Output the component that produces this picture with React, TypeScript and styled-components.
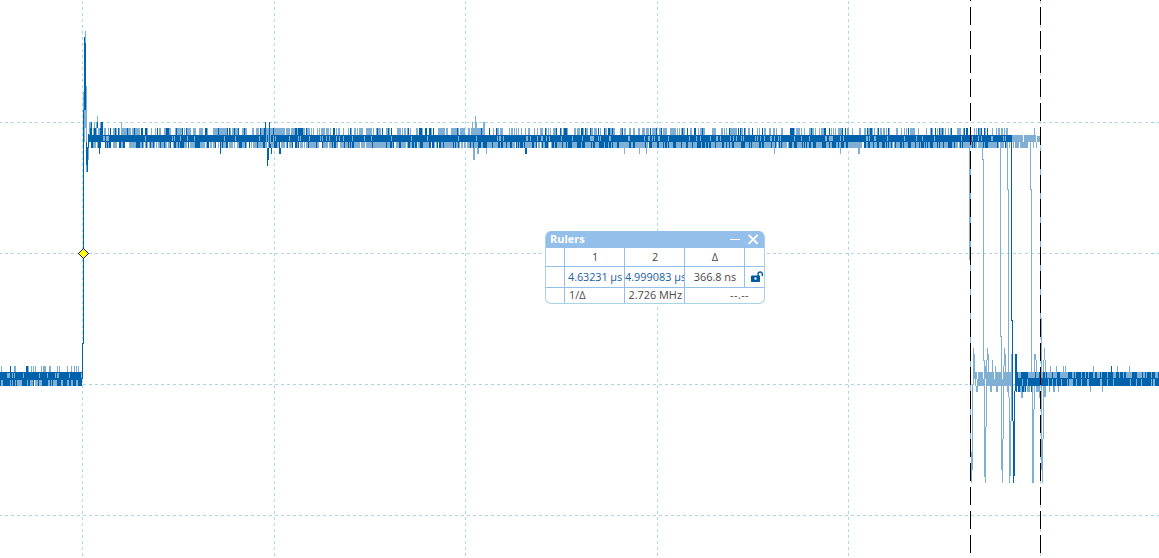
import React from "react";
import styled, { createGlobalStyle } from "styled-components";

const GlobalStyle = createGlobalStyle`
  body { margin: 0; background: #fff; overflow: hidden; }
`;

const DARK = "#0062ab";
const LIGHT = "#80afd6";
const WIDTH = 1159;
const HEIGHT = 558;

const Scope = styled.main`
  position: relative;
  width: ${WIDTH}px;
  height: ${HEIGHT}px;
  overflow: hidden;
  background: #fff;
  font-family: "Open Sans", "Noto Sans", sans-serif;
`;

const Plot = styled.svg`
  display: block;
  width: ${WIDTH}px;
  height: ${HEIGHT}px;
`;

const RulersWindow = styled.section`
  position: absolute;
  left: 545px;
  top: 231px;
  width: 220px;
  height: 73px;
  box-sizing: border-box;
  border: 1px solid #a9d3e6;
  border-top: 0;
  border-radius: 6px;
  overflow: hidden;
  background: #fff;
`;

const TitleBar = styled.header`
  display: flex;
  align-items: center;
  height: 17px;
  margin: 0 -1px;
  box-sizing: border-box;
  padding: 0 6px 1px 5px;
  background: #93bfea;
  color: #fff;
  font-size: 11px;
  font-weight: 700;
  line-height: 15px;
`;

const Title = styled.span`
  flex: 1;
  padding-bottom: 2px;
`;

const TitleIcons = styled.svg`
  display: block;
  width: 30px;
  height: 16px;
`;

const Table = styled.div`
  display: grid;
  grid-template-columns: 19px 60px 60px 60px 20px;
  grid-template-rows: 19px 21px 16px;
`;

const Cell = styled.div<{
  $align?: string;
  $color?: string;
  $span?: number;
  $pad?: string;
  $spacing?: string;
  $last?: boolean;
  $bottom?: boolean;
}>`
  display: flex;
  align-items: center;
  justify-content: ${(p) => p.$align ?? "center"};
  grid-column: span ${(p) => p.$span ?? 1};
  box-sizing: border-box;
  min-width: 0;
  overflow: hidden;
  padding: ${(p) => p.$pad ?? "0 0 2px 1px"};
  border-right: ${(p) => (p.$last ? "0" : "1px solid #93bfea")};
  border-bottom: ${(p) => (p.$bottom ? "0" : "1px solid #93bfea")};
  color: ${(p) => p.$color ?? "#4a4a4a"};
  font-size: 10.9px;
  line-height: 15px;
  letter-spacing: ${(p) => p.$spacing ?? "normal"};
  white-space: nowrap;
`;

const LockIcon = styled.svg`
  width: 12px;
  height: 11px;
  margin-left: 3px;
  flex: none;
`;

type Bar = [x: number, top: number, bottom: number, width?: number];

function createRandom(seed: number) {
  let s = seed;
  return () => {
    s = (s + 0x6d2b79f5) | 0;
    let t = Math.imul(s ^ (s >>> 15), 1 | s);
    t = (t + Math.imul(t ^ (t >>> 7), 61 | t)) ^ t;
    return ((t ^ (t >>> 14)) >>> 0) / 4294967296;
  };
}

const bars = (list: Bar[]) =>
  list.map(([x, top, bottom, w = 1]) => `M${x} ${top}h${w}v${bottom - top}h${-w}z`).join("");

/* Noise samples one pixel wide; some neighbours share an intensity. */
function noise(
  from: number,
  to: number,
  top: number,
  bottom: number,
  light: number,
  dark: number,
  seed: number,
) {
  const random = createRandom(seed);
  const out: { light: Bar[]; dark: Bar[] } = { light: [], dark: [] };
  let x = from;
  while (x < to) {
    const r = random();
    const l = random();
    const run = Math.min(to - x, light < 0.3 || l < 0.85 ? 1 : 2);
    if (r < light) out.light.push([x, top, bottom, run]);
    else if (r < light + dark) out.dark.push([x, top, bottom, run]);
    x += run;
  }
  return out;
}

const bands = [
  noise(90, 260, 128, 135, 0.48, 0.17, 11),
  noise(260, 305, 128, 135, 0.55, 0.32, 13),
  noise(305, 560, 128, 135, 0.46, 0.09, 17),
  noise(560, 700, 128, 135, 0.36, 0.14, 27),
  noise(700, 1008, 128, 135, 0.38, 0.1, 29),
  noise(91, 310, 142, 148, 0.48, 0.28, 31),
  noise(310, 470, 142, 148, 0.6, 0.32, 37),
  noise(470, 1008, 142, 148, 0.62, 0.35, 47),
  noise(0, 82, 379, 386, 0.42, 0.54, 5),
  noise(974, 1013, 372, 379, 0.65, 0, 8),
  noise(1016, 1159, 372, 378, 0.5, 0.5, 71),
  noise(1016, 1040, 386, 392, 0.4, 0.15, 77),
];

/* Paler samples inside the solid core of the trace. */
const slots = [
  noise(95, 460, 136, 141, 0.09, 0, 101),
  noise(460, 1008, 136, 141, 0.17, 0, 109),
  noise(0, 82, 373, 378, 0.18, 0, 117),
  noise(1016, 1159, 379, 386, 0.2, 0, 123),
];

const lightBars: Bar[] = [
  // overshoot after the rising edge
  [83, 92, 110], [85, 31, 43], [84, 110, 142], [85, 110, 128], [86, 86, 172],
  [88, 147, 160], [89, 122, 135], [90, 122, 128], [94, 122, 128], [96, 122, 128],
  [97, 116, 122], [100, 122, 135], [121, 122, 128],
  // crosstalk near the second and third divisions
  [472, 122, 128], [475, 116, 128], [476, 122, 128], [471, 128, 135, 10],
  [483, 122, 135, 2], [473, 148, 160, 2], [477, 148, 154, 2], [486, 148, 154],
  [624, 148, 154], [639, 148, 154], [646, 148, 154], [774, 148, 154], [840, 148, 154],
  [858, 148, 154, 2],
  // persistence at the end of the pulse
  [1012, 135, 142, 11], [1024, 135, 142, 12], [1037, 136, 142, 4],
  [1009, 142, 148], [1013, 142, 148], [1015, 142, 148, 4], [1020, 142, 148, 8],
  [1033, 142, 148], [1036, 142, 148], [1034, 128, 135],
  // falling edges
  [969, 142, 260], [970, 160, 452], [971, 452, 483], [972, 385, 470],
  [973, 348, 385], [974, 354, 372], [975, 372, 386], [976, 386, 392, 2],
  [982, 142, 160], [983, 159, 361], [984, 360, 477], [985, 366, 379],
  [985, 427, 483], [986, 360, 427], [987, 348, 360], [988, 354, 379],
  [1000, 148, 337], [1001, 336, 470], [1002, 439, 483], [1003, 366, 439],
  [1004, 348, 366], [1005, 354, 372],
  [1007, 142, 190], [1008, 189, 397], [1009, 397, 483], [1010, 421, 476],
  [1011, 354, 421],
  [1030, 142, 190], [1031, 189, 386], [1032, 385, 483], [1033, 409, 483],
  [1034, 354, 409], [1035, 354, 360], [1036, 360, 372],
  [1040, 148, 320], [1041, 318, 470], [1042, 439, 483], [1043, 360, 439],
  [1044, 348, 360], [1045, 360, 397], [1044, 386, 397], [1039, 386, 398], [1021, 386, 398, 2],
  // settling samples under the pulse tail
  [977, 379, 386, 7], [987, 379, 386, 26], [991, 372, 386, 3], [997, 372, 386, 5],
  [1003, 372, 386, 10], [992, 360, 372], [995, 366, 372], [990, 386, 392, 2],
  [996, 386, 392, 2], [1007, 386, 392, 2],
  // low level outliers
  ...[1, 14, 15, 28, 31, 33, 35, 41, 43, 44, 45, 49, 50, 57, 59, 67, 71, 74, 76, 78].map(
    (x): Bar => [x, 366, 372],
  ),
  ...[1050, 1056, 1063, 1065, 1093, 1117, 1129].map((x): Bar => [x, 366, 372]),
  ...[1049, 1053, 1054, 1058, 1090, 1102].map((x): Bar => [x, 386, 392]),
];

const darkBars: Bar[] = [
  [0, 372, 379, 83], [0, 379, 380, 82],
  [82, 343, 379], [83, 110, 344], [84, 37, 110], [85, 43, 110],
  [86, 142, 165], [87, 147, 172], [88, 134, 148], [91, 122, 135],
  [101, 122, 135, 2], [97, 122, 128], [99, 148, 154], [98, 142, 148, 3],
  [89, 135, 142, 923],
  [220, 148, 154], [265, 122, 135], [269, 122, 135], [267, 148, 166],
  [268, 148, 160], [271, 148, 154], [279, 148, 154, 2],
  [525, 148, 154, 2],
  [1011, 142, 321], [1012, 320, 421], [1013, 421, 483], [1014, 391, 476],
  [1015, 354, 391], [1016, 354, 372], [1018, 386, 392, 2],
  [1016, 378, 386, 143], [10, 366, 372], [26, 366, 372, 2], [1111, 366, 372],
];

const slotBars: Bar[] = [
  [266, 128, 146], [268, 128, 148], [270, 128, 144], [273, 136, 148], [275, 136, 141],
];

const gridX = [82, 274, 465, 657, 848, 1040];
const gridY = [122, 253, 384, 515];

export default function App() {
  return (
    <Scope>
      <GlobalStyle />
      <Plot viewBox={`0 0 ${WIDTH} ${HEIGHT}`} shapeRendering="crispEdges">
        <g stroke="#abd5e3" strokeDasharray="3 3" fill="none">
          {gridY.map((y) => (
            <path key={y} d={`M-1 ${y + 0.5}H${WIDTH}`} />
          ))}
          {gridX.map((x) => (
            <path key={x} d={`M${x + 0.5} -5V556`} stroke="#a6dbe9" />
          ))}
        </g>
        <g>
          <path fill={LIGHT} d={bands.map((b) => bars(b.light)).join("") + bars(lightBars)} />
          <path fill={DARK} d={bands.map((b) => bars(b.dark)).join("")} />
          <path fill={DARK} d={bars(darkBars)} />
          <path fill={LIGHT} d={slots.map((b) => bars(b.light)).join("") + bars(slotBars)} />
        </g>
        <g stroke="#000" strokeDasharray="18 6">
          <path d="M970.5 -17V554" />
          <path d="M1040.5 -17V554" />
        </g>
        <path
          d="M83.5 248.5L88.5 253.5L83.5 258.5L78.5 253.5Z"
          fill="#ff0"
          stroke="#1a1a8c"
        />
      </Plot>
      <RulersWindow>
        <TitleBar>
          <Title>Rulers</Title>
          <TitleIcons viewBox="0 0 30 16" fill="none" stroke="#fff">
            <path d="M1 8.5H11" />
            <path d="M19.6 3.9L28.6 12.9M28.6 3.9L19.6 12.9" strokeWidth="2" />
          </TitleIcons>
        </TitleBar>
        <Table>
          <Cell />
          <Cell>1</Cell>
          <Cell>2</Cell>
          <Cell>Δ</Cell>
          <Cell $last />
          <Cell />
          <Cell $align="flex-start" $pad="0 0 2px 3px" $color="#1c609f" $spacing="-0.1px">
            4.63231 µs
          </Cell>
          <Cell $align="flex-start" $pad="0 0 2px" $color="#1c609f">4.999083 µs</Cell>
          <Cell>366.8 ns</Cell>
          <Cell $last $pad="0 0 1px">
            <LockIcon viewBox="0 0 12 11">
              <path
                fill="#005a9c"
                fillRule="evenodd"
                d="M1 4.5H8.2Q9 4.5 9 5.3V10.2Q9 11 8.2 11H.8Q0 11 0 10.2V5.3Q0 4.5 1 4.5ZM4.5 6.3A1.1 1.1 0 1 0 4.5 8.7A1.1 1.1 0 1 0 4.5 6.3Z"
              />
              <path d="M7.1 5V3.1A2.1 2.1 0 0 1 11.3 3.1V5" fill="none" stroke="#005a9c" strokeWidth="1.4" />
            </LockIcon>
          </Cell>
          <Cell $bottom />
          <Cell $bottom $align="flex-start" $pad="0 0 3px 4px">1/Δ</Cell>
          <Cell $bottom $align="flex-end" $pad="0 2px 3px 0">2.726 MHz</Cell>
          <Cell $bottom $last $span={2} $align="flex-end" $pad="0 16px 3px 0" $spacing="0.4px">
            --.--
          </Cell>
        </Table>
      </RulersWindow>
    </Scope>
  );
}
